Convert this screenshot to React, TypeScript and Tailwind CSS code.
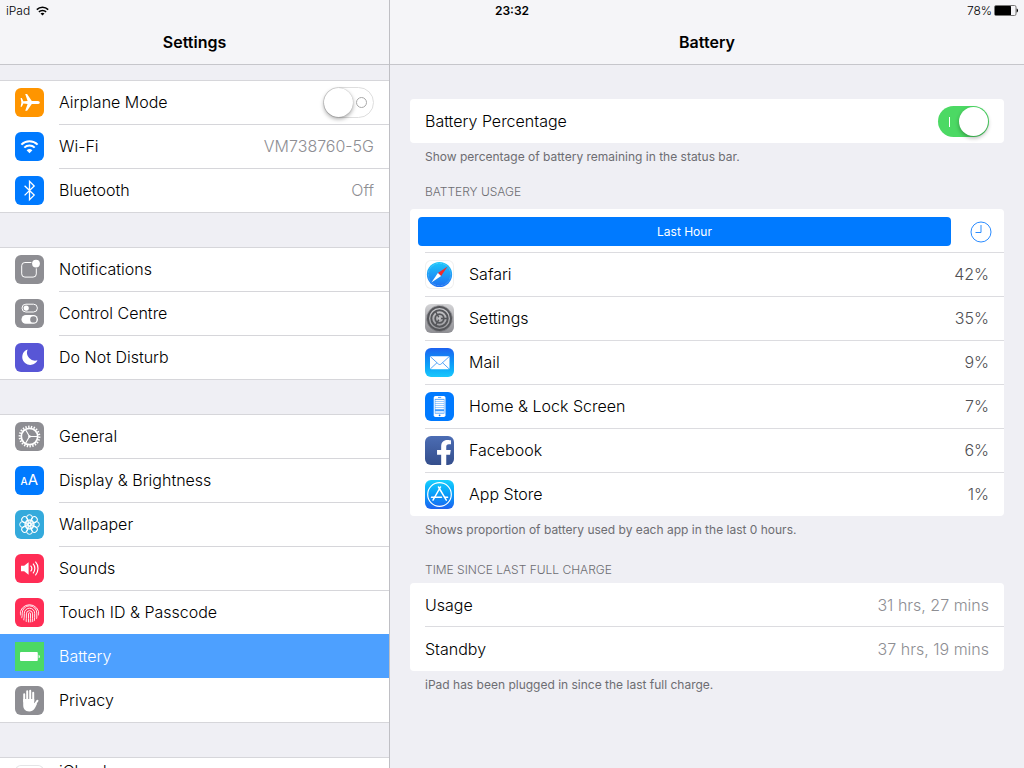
import { useId, useState } from "react"
import type { ReactNode } from "react"
import { FaFacebookF } from "react-icons/fa"
import clsx from "clsx"

function Tile({ className, children }: { className?: string; children?: ReactNode }) {
  return (
    <svg viewBox="0 0 29 29" aria-hidden="true" className={clsx("size-[29px] shrink-0 rounded-md", className)}>
      {children}
    </svg>
  )
}

function AirplaneIcon() {
  return (
    <Tile className="bg-[#ff9500]">
      <path
        fill="white"
        d="M24.8 14.4c0 1-1.2 1.5-2.6 1.5h-5.4l-4.7 6.9h-1.9l2.4-6.9-4.2-.3-1.6 3.1H5.6l.8-4.3-.8-4.3h1.2l1.6 3.1 4.2-.3-2.4-6.9h1.9l4.7 6.9h5.4c1.4 0 2.6.5 2.6 1.5z"
      />
    </Tile>
  )
}

function WifiIcon() {
  return (
    <Tile className="bg-[#007aff]">
      <g fill="none" stroke="white" strokeWidth="2">
        <path d="M6.4 12.6a11.4 11.4 0 0 1 16.2 0" />
        <path d="M9.3 15.6a7.3 7.3 0 0 1 10.4 0" />
        <path d="M14.5 21.3l-2.9-3a4.2 4.2 0 0 1 5.8 0z" fill="white" stroke="none" />
      </g>
    </Tile>
  )
}

function BluetoothIcon() {
  return (
    <Tile className="bg-[#007aff]">
      <path d="M9.6 9.7l9.6 9.4-4.7 4.7V5.4l4.7 4.6-9.6 9.4" fill="none" stroke="white" strokeWidth="1.3" />
    </Tile>
  )
}

function NotificationsIcon() {
  return (
    <Tile className="bg-[#8e8e93]">
      <rect x="6.7" y="7.5" width="14.6" height="14.6" rx="3.2" fill="none" stroke="white" strokeWidth="1" />
      <circle cx="21" cy="8.6" r="4.8" fill="#8e8e93" />
      <circle cx="21" cy="8.6" r="3.9" fill="white" />
    </Tile>
  )
}

function ControlCentreIcon() {
  return (
    <Tile className="bg-[#8e8e93]">
      <rect x="7" y="5.2" width="15.4" height="7.8" rx="3.9" fill="none" stroke="white" strokeWidth="1" />
      <circle cx="11.2" cy="9.1" r="2.6" fill="white" />
      <rect x="6.5" y="16" width="16.4" height="8.8" rx="4.4" fill="white" />
      <circle cx="18.4" cy="20.4" r="3.2" fill="#8e8e93" />
    </Tile>
  )
}

function MoonIcon() {
  return (
    <Tile className="bg-[#5856d6]">
      <path d="M12.6 6.4a8 8 0 1 0 9.9 10.9A8.2 8.2 0 0 1 12.6 6.4z" fill="white" />
    </Tile>
  )
}

function GeneralIcon() {
  return (
    <Tile className="bg-[#8e8e93]">
      <g fill="none" stroke="white">
        <circle cx="14.5" cy="14.5" r="9.8" strokeWidth="2.2" pathLength="44" strokeDasharray="1 1" />
        <circle cx="14.5" cy="14.5" r="8.2" strokeWidth="1.7" />
        <path d="M14.5 14.5h7.6M14.5 14.5l-3.9-6.7M14.5 14.5l-3.9 6.7" strokeWidth="1.1" />
      </g>
      <circle cx="14.5" cy="14.5" r="1.3" fill="white" />
    </Tile>
  )
}

function DisplayIcon() {
  return (
    <Tile className="bg-[#007aff] font-['Inter',sans-serif]">
      <text x="5.5" y="19" fontSize="10" fontWeight="500" fill="white">A</text>
      <text x="12.8" y="19" fontSize="15" fontWeight="400" fill="white">A</text>
    </Tile>
  )
}

const petals = [0, 45, 90, 135, 180, 225, 270, 315]

function WallpaperIcon() {
  return (
    <Tile className="bg-[#34aadc]">
      <g fill="none" stroke="white" strokeWidth="1">
        {petals.map((angle) => (
          <g key={angle} transform={`rotate(${angle} 14.5 14.5)`}>
            <circle cx="14.5" cy="7.6" r="2.9" />
            <circle cx="14.5" cy="11.5" r="1.7" />
          </g>
        ))}
        <circle cx="14.5" cy="14.5" r="1.5" />
      </g>
    </Tile>
  )
}

function SoundsIcon() {
  return (
    <Tile className="bg-[#ff2d55]">
      <path d="M6 11.8h3.2l4.4-3.6v12.6l-4.4-3.6H6z" fill="white" />
      <g fill="none" stroke="white" strokeWidth="1.2">
        <path d="M15.6 11.6a4.4 4.4 0 0 1 0 5.8" />
        <path d="M18 9.6a7.4 7.4 0 0 1 0 9.8" />
        <path d="M20.4 7.7a10.2 10.2 0 0 1 0 13.6" />
      </g>
    </Tile>
  )
}

function TouchIdIcon() {
  return (
    <Tile className="bg-[#ff2d55]">
      <clipPath id="finger">
        <circle cx="14.5" cy="14.5" r="10" />
      </clipPath>
      <g fill="none" stroke="white" strokeWidth="0.9" clipPath="url(#finger)">
        <path d="M5.2 17.5a9.4 9.4 0 1 1 18.6 0" />
        <path d="M6.6 20.5c.6-2 .6-3.6.6-5.4a7.3 7.3 0 0 1 14.6 0v6" />
        <path d="M8.6 23c.7-2.6.7-5 .7-7.6a5.2 5.2 0 0 1 10.4 0c0 3 0 5.6-.5 8.6" />
        <path d="M11 25c.4-3 .4-6 .4-9.2a3.1 3.1 0 0 1 6.2 0c0 3 0 6-.5 9.2" />
        <path d="M13.4 25c.2-3 .1-6 .1-9.2a1 1 0 0 1 2 0c0 3 0 6-.3 9.2" />
      </g>
    </Tile>
  )
}

function BatteryIcon() {
  return (
    <svg viewBox="0 0 29 29" aria-hidden="true" className="size-[29px] shrink-0 bg-[#4cd964]">
      <rect x="5" y="10" width="17.8" height="9" rx="1" fill="white" />
      <path d="M23.6 12.7c1.7.5 1.7 3.1 0 3.6z" fill="white" />
    </svg>
  )
}

function PrivacyIcon() {
  return (
    <Tile className="bg-[#8e8e93]">
      <g stroke="white" strokeWidth="2" strokeLinecap="round" fill="none">
        <path d="M9.2 15.5V8.2M12.2 14V5.3M15.2 14V4.8M18.2 15V6.8" />
        <path d="M18.4 20.5l4.1-5.8" />
      </g>
      <path d="M8.2 13h11v4.5l1.4-1 1.3 1.6c-1.4 3.2-2.9 7.4-7.6 7.4-4.5 0-6.1-3.1-6.1-6.5z" fill="white" />
    </Tile>
  )
}

function SafariIcon() {
  return (
    <Tile className="bg-white ring-1 ring-[#f0f0f0] ring-inset">
      <linearGradient id="safari" x1="0" y1="0" x2="0" y2="1">
        <stop offset="0" stopColor="#1cc8fb" />
        <stop offset="1" stopColor="#1d6ff2" />
      </linearGradient>
      <circle cx="14.5" cy="14.5" r="12.6" fill="url(#safari)" />
      <circle cx="14.5" cy="14.5" r="11.2" fill="none" stroke="white" strokeOpacity="0.5" strokeWidth="1" strokeDasharray="0.4 1" />
      <path d="M22.6 6.4l-6.5 9.7-3.2-3.2z" fill="#f02b2b" />
      <path d="M6.4 22.6l6.5-9.7 3.2 3.2z" fill="white" />
    </Tile>
  )
}

function SettingsIcon() {
  return (
    <Tile className="bg-linear-to-b from-[#d4d4d6] to-[#8e8e93]">
      <g fill="none" stroke="#55565a">
        <circle cx="14.5" cy="14.5" r="11.5" strokeWidth="2" />
        <circle cx="14.5" cy="14.5" r="12.8" strokeWidth="0.8" pathLength="120" strokeDasharray="1 1" />
        <circle cx="14.5" cy="14.5" r="8.2" strokeWidth="2" />
        <circle cx="14.5" cy="14.5" r="4.3" strokeWidth="1.8" />
        <path d="M14.5 14.5h8M14.5 14.5l-4-7M14.5 14.5l-4 7" strokeWidth="1.5" />
      </g>
      <circle cx="14.5" cy="14.5" r="1.4" fill="#c6c6c8" />
    </Tile>
  )
}

function MailIcon() {
  return (
    <Tile className="bg-linear-to-b from-[#1d62f0] to-[#1ac8fc]">
      <rect x="5" y="8.2" width="19.5" height="13" rx="1.2" fill="white" />
      <path d="M5.4 8.7l8 7.3c.8.7 1.9.7 2.7 0l8-7.3M5.4 20.9l6.6-6.2M24.1 20.9l-6.6-6.2" fill="none" stroke="#2f8ff5" strokeWidth="0.8" />
    </Tile>
  )
}

function PhoneIcon() {
  return (
    <Tile className="bg-[#007aff]">
      <rect x="8.7" y="4" width="11.8" height="21" rx="1.8" fill="white" />
      <rect x="9.8" y="6.9" width="9.6" height="14.7" fill="#3f9bff" />
      <path d="M10.3 8.5h8.6M10.3 10.5h8.6M10.3 12.5h8.6M10.3 14.5h8.6M10.3 16.5h8.6M10.3 20h8.6" stroke="white" strokeWidth="1.3" />
      <path d="M13 5.4h3.2" stroke="#007aff" strokeWidth="0.7" />
      <circle cx="14.6" cy="23.3" r="0.9" fill="#007aff" />
    </Tile>
  )
}

function FacebookIcon() {
  return (
    <Tile className="bg-linear-to-b from-[#4c6db4] to-[#344e8c]">
      <FaFacebookF x="6" y="4" size={26} color="white" />
    </Tile>
  )
}

function AppStoreIcon() {
  return (
    <Tile className="bg-linear-to-b from-[#1ad0fd] to-[#1d62f0]">
      <g fill="none" stroke="white">
        <circle cx="14.5" cy="14.5" r="11.8" strokeWidth="1.2" />
        <g strokeWidth="1.5" strokeLinecap="round">
          <path d="M13.5 7l7.8 13.2M15.5 7L8 20.2" />
          <path d="M6.5 17.2h10M19.6 17.2h3" />
        </g>
      </g>
    </Tile>
  )
}

function ClockIcon() {
  return (
    <svg viewBox="0 0 22 22" aria-hidden="true" className="size-[22px]" fill="none" stroke="#2b8cff">
      <circle cx="11" cy="11" r="10" />
      <path d="M11 4v7.5H5.5" />
    </svg>
  )
}

type SwitchProps = {
  id: string
  checked: boolean
  onChange: (checked: boolean) => void
}

function Switch({ id, checked, onChange }: SwitchProps) {
  return (
    <input
      id={id}
      type="checkbox"
      role="switch"
      checked={checked}
      onChange={(e) => onChange(e.target.checked)}
      className={clsx(
        "relative h-[31px] w-[51px] shrink-0 appearance-none rounded-full before:absolute before:rounded-full before:bg-white before:content-[''] after:absolute after:content-['']",
        checked
          ? "bg-[#4cd964] before:top-px before:right-px before:size-[29px] before:shadow-[0_2px_4px_rgba(0,0,0,0.3)] after:top-[11px] after:left-[11px] after:h-[10px] after:w-px after:bg-white"
          : "border border-[#dedede] bg-white before:top-0 before:left-0 before:size-[29px] before:shadow-[0_2px_4px_rgba(0,0,0,0.35),0_0_1px_rgba(0,0,0,0.3)] after:top-[9px] after:right-[6px] after:size-[11px] after:rounded-full after:border after:border-[#a8a8a8]",
      )}
    />
  )
}

type Item = {
  label: string
  icon: ReactNode
  value?: string
  // account rows keep their label on the first of two lines
  tall?: boolean
}

const groups: Item[][] = [
  [
    { label: "Wi-Fi", icon: <WifiIcon />, value: "VM738760-5G" },
    { label: "Bluetooth", icon: <BluetoothIcon />, value: "Off" },
  ],
  [
    { label: "Notifications", icon: <NotificationsIcon /> },
    { label: "Control Centre", icon: <ControlCentreIcon /> },
    { label: "Do Not Disturb", icon: <MoonIcon /> },
  ],
  [
    { label: "General", icon: <GeneralIcon /> },
    { label: "Display & Brightness", icon: <DisplayIcon /> },
    { label: "Wallpaper", icon: <WallpaperIcon /> },
    { label: "Sounds", icon: <SoundsIcon /> },
    { label: "Touch ID & Passcode", icon: <TouchIdIcon /> },
    { label: "Battery", icon: <BatteryIcon /> },
    { label: "Privacy", icon: <PrivacyIcon /> },
  ],
  [{ label: "iCloud", icon: <Tile className="bg-white ring-1 ring-[#e4e4e6] ring-inset" />, tall: true }],
]

const apps: Item[] = [
  { label: "Safari", icon: <SafariIcon />, value: "42%" },
  { label: "Settings", icon: <SettingsIcon />, value: "35%" },
  { label: "Mail", icon: <MailIcon />, value: "9%" },
  { label: "Home & Lock Screen", icon: <PhoneIcon />, value: "7%" },
  { label: "Facebook", icon: <FacebookIcon />, value: "6%" },
  { label: "App Store", icon: <AppStoreIcon />, value: "1%" },
]

function StatusBar() {
  return (
    <div className="absolute inset-x-0 top-0 z-10 grid h-[21px] grid-cols-3 items-center px-1.5 text-xs">
      <div className="flex items-center gap-1.5">
        <span>iPad</span>
        <svg viewBox="0 0 13 10" aria-hidden="true" className="h-[10px] w-[13px]" fill="none" stroke="black" strokeWidth="1.5">
          <path d="M.8 3.6a8.2 8.2 0 0 1 11.4 0M2.9 5.9a5.1 5.1 0 0 1 7.2 0" />
          <path d="M6.5 9.6L4.5 7.6a2.9 2.9 0 0 1 4 0z" fill="black" stroke="none" />
        </svg>
      </div>
      <span className="text-center font-semibold">23:32</span>
      <div className="flex items-center justify-end gap-0.5">
        <span>78%</span>
        <svg viewBox="0 0 24 11" aria-hidden="true" className="h-[11px] w-6">
          <rect x="0.5" y="0.5" width="21.5" height="10" rx="1.5" fill="none" stroke="#777" />
          <rect x="1" y="1" width="16" height="9" rx="0.5" fill="black" />
          <path d="M22.7 3.5c1.7.6 1.7 3.4 0 4z" fill="black" />
        </svg>
      </div>
    </div>
  )
}

function TitleBar({ title }: { title: string }) {
  return (
    <header className="h-[65px] shrink-0 border-b border-[#c6c6cb] bg-[#f5f5f8] pt-5 text-center">
      <h1 className="text-base leading-[44px] font-semibold">{title}</h1>
    </header>
  )
}

type SidebarRowProps = {
  item: Item
  first: boolean
  divider: boolean
  active: boolean
  onSelect: () => void
}

function SidebarRow({ item, first, divider, active, onSelect }: SidebarRowProps) {
  return (
    <button
      type="button"
      onClick={onSelect}
      className={clsx(
        "flex h-11 w-full items-center gap-[15px] pl-[15px] text-left",
        first && "border-t border-[#d6d6da]",
        active && "bg-[#4da0ff] text-white",
      )}
    >
      {item.icon}
      <span
        className={clsx(
          "flex h-11 min-w-0 flex-1 justify-between border-t pr-[15px] pb-0.5",
          item.tall ? "items-start" : "items-center",
          divider ? "border-[#d6d6da]" : "border-transparent",
        )}
      >
        <span>{item.label}</span>
        <span className="text-[#8e8e93]">{item.value}</span>
      </span>
    </button>
  )
}

function Sidebar() {
  const [airplane, setAirplane] = useState(false)
  const [selected, setSelected] = useState("Battery")
  const airplaneId = useId()

  return (
    <aside className="flex w-[390px] shrink-0 flex-col overflow-hidden border-r border-[#bfbfc4]">
      <TitleBar title="Settings" />
      <nav className="flex min-h-0 flex-1 flex-col gap-[34px] overflow-hidden pt-[15px]">
        {groups.map((items, i) => (
          <div key={i} className="shrink-0 border-b border-[#d6d6da] bg-white">
            {i === 0 && (
              <div className="flex h-11 items-center justify-between border-t border-[#d6d6da] px-[15px]">
                <label htmlFor={airplaneId} className="flex items-center gap-[15px]">
                  <AirplaneIcon />
                  <span className="pb-0.5">Airplane Mode</span>
                </label>
                <Switch id={airplaneId} checked={airplane} onChange={setAirplane} />
              </div>
            )}
            {items.map((item, j) => {
              const first = i > 0 && j === 0
              const active = item.label === selected
              return (
                <SidebarRow
                  key={item.label}
                  item={item}
                  first={first}
                  divider={!first && !active && items[j - 1]?.label !== selected}
                  active={active}
                  onSelect={() => setSelected(item.label)}
                />
              )
            })}
          </div>
        ))}
      </nav>
    </aside>
  )
}

function Footnote({ children }: { children: ReactNode }) {
  return <p className="px-[15px] pt-1 text-xs leading-5 font-normal text-[#6d6d72]">{children}</p>
}

function BatteryPane() {
  const [showPercentage, setShowPercentage] = useState(true)
  const percentageId = useId()

  return (
    <main className="flex min-w-0 flex-1 flex-col">
      <TitleBar title="Battery" />
      <div className="px-5 pt-[34px]">
        <section>
          <div className="flex h-11 items-center justify-between rounded bg-white px-[15px]">
            <label htmlFor={percentageId}>Battery Percentage</label>
            <Switch id={percentageId} checked={showPercentage} onChange={setShowPercentage} />
          </div>
          <Footnote>Show percentage of battery remaining in the status bar.</Footnote>
        </section>

        <section className="pt-[15px]">
          <h2 className="px-[15px] pb-[7px] text-xs leading-5 text-[#6d6d72] uppercase">Battery Usage</h2>
          <div className="rounded bg-white">
            <div className="flex items-center gap-[19px] pt-2 pr-3 pb-1.5 pl-2">
              <button type="button" className="h-[29px] flex-1 rounded bg-[#007aff] text-xs font-normal text-white">
                Last Hour
              </button>
              <button type="button" aria-label="Show time on screen">
                <ClockIcon />
              </button>
            </div>
            <ul className="pl-[15px]">
              {apps.map((app) => (
                <li key={app.label} className="flex h-11 items-center gap-[15px] border-t border-[#dcdce0] pr-[15px]">
                  {app.icon}
                  <span className="flex-1 pb-0.5">{app.label}</span>
                  <span className="pb-0.5 text-[#505054]">{app.value}</span>
                </li>
              ))}
            </ul>
          </div>
          <Footnote>Shows proportion of battery used by each app in the last 0 hours.</Footnote>
        </section>

        <section className="pt-5">
          <h2 className="px-[15px] pb-[3px] text-xs leading-5 text-[#6d6d72] uppercase">Time Since Last Full Charge</h2>
          <dl className="rounded bg-white pl-[15px]">
            <div className="flex h-11 items-center justify-between border-b border-[#dcdce0] pr-[15px]">
              <dt>Usage</dt>
              <dd className="text-[#8e8e93]">31 hrs, 27 mins</dd>
            </div>
            <div className="flex h-11 items-center justify-between pr-[15px] pb-px">
              <dt>Standby</dt>
              <dd className="text-[#8e8e93]">37 hrs, 19 mins</dd>
            </div>
          </dl>
          <Footnote>iPad has been plugged in since the last full charge.</Footnote>
        </section>
      </div>
    </main>
  )
}

export default function App() {
  return (
    <div className="relative flex h-screen overflow-hidden bg-[#efeff4] font-['Inter',sans-serif] text-base font-[350] text-black">
      <StatusBar />
      <Sidebar />
      <BatteryPane />
    </div>
  )
}
